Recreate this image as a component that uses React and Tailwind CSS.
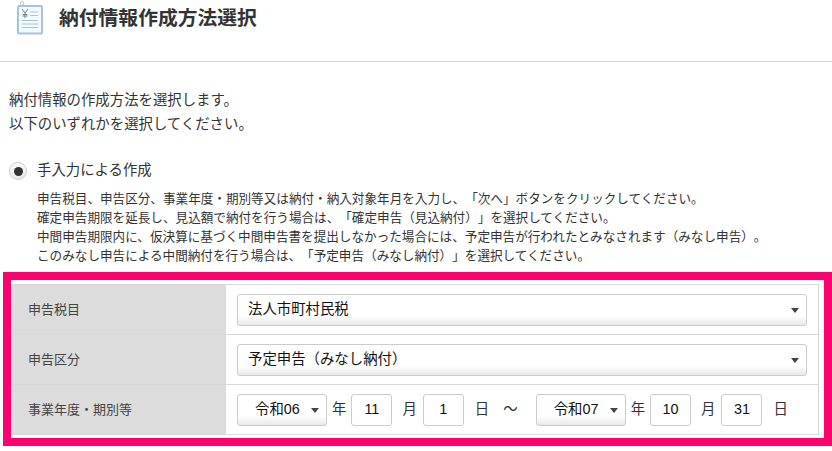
function Caret() {
  return <span className="w-0 h-0 border-x-[4px] border-x-transparent border-t-[5px] border-t-[#444]" />;
}

function Sel({ children, className }) {
  return (
    <div className={`flex items-center h-[32px] mt-[1px] rounded-[3px] border border-[#ccc] bg-gradient-to-b from-white from-70% to-[#e8e8e8] text-[14.4px] text-[#111] ${className}`}>
      {children}
    </div>
  );
}

function Num({ children }) {
  return (
    <div className="flex items-center justify-center h-[32px] mt-[1px] w-[41px] rounded-[3px] border border-[#ccc] bg-white text-[14.4px] text-[#111]">{children}</div>
  );
}

function Row({ label, children, last }) {
  return (
    <div className={`flex ${last ? "h-[49px]" : "h-[50px] border-b border-[#d8d8d8]"}`}>
      <div className="flex items-center w-[216px] shrink-0 bg-[#dcdcdc] pl-[17px] text-[13px] text-[#444] border-r border-white">{label}</div>
      <div className="flex items-center flex-1 pl-[10px] pr-[11px]">{children}</div>
    </div>
  );
}

export default function App() {
  return (
    <div className="w-[832px] h-[451px] overflow-hidden bg-white text-[#333] [text-spacing-trim:space-all] font-['Liberation_Sans','Noto_Sans_CJK_JP',sans-serif]">
      <div className="flex items-start h-[62px] border-b border-[#d4d4d4] pl-[17px]">
        <svg width="27" height="36" viewBox="0 0 27 36" className="shrink-0">
          <rect x="1" y="6" width="24" height="27.5" rx="1" fill="#f4f9fd" stroke="#a5c5dd" strokeWidth="2" />
          <path d="M4 6 L3 3 L5 1.5 L7 3 L6 6" fill="none" stroke="#a5c5dd" strokeWidth="1" />
          <path d="M5 9 L8 13 L11 9 M8 13 V18 M5.5 14.5 H10.5 M5.5 16 H10.5" fill="none" stroke="#6b8396" strokeWidth="1" />
          <path d="M13 12 H21 M13 15.5 H21 M5 20.5 H21 M5 24 H21 M5 27.5 H21" stroke="#a5c5dd" strokeWidth="1.2" />
        </svg>
        <h1 className="ml-[15px] mt-[5px] text-[19.8px] leading-[26px] font-bold text-[#333]">納付情報作成方法選択</h1>
      </div>

      <div className="pl-[9px] pt-[26px] text-[14.4px] leading-[24px] text-[#333]">
        <p>納付情報の作成方法を選択します。</p>
        <p>以下のいずれかを選択してください。</p>
      </div>

      <div className="flex items-center pl-[9px] mt-[22px] h-[26px]">
        <span className="flex items-center justify-center w-[18px] h-[18px] rounded-full border border-[#ccc] bg-gradient-to-b from-white to-[#e8e8e8]">
          <span className="w-[9px] h-[9px] rounded-full bg-[#333]" />
        </span>
        <span className="ml-[10px] text-[14.4px] text-[#333]">手入力による作成</span>
      </div>

      <div className="pl-[37px] mt-[6px] text-[12.6px] leading-[19px] text-[#333] whitespace-nowrap">
        <p>申告税目、申告区分、事業年度・期別等又は納付・納入対象年月を入力し、「次へ」ボタンをクリックしてください。</p>
        <p>確定申告期限を延長し、見込額で納付を行う場合は、「確定申告（見込納付）」を選択してください。</p>
        <p>中間申告期限内に、仮決算に基づく中間申告書を提出しなかった場合には、予定申告が行われたとみなされます（みなし申告）。</p>
        <p>このみなし申告による中間納付を行う場合は、「予定申告（みなし納付）」を選択してください。</p>
      </div>

      <div className="ml-[3px] mt-[6px] w-[829px] h-[174px] border-[8px] border-[#ff006f] pt-[4px] pr-[5px] pb-[3px]">
        <div className="border-y border-r border-[#d8d8d8]">
          <Row label="申告税目">
            <Sel className="w-full pl-[10px] pr-[7px] justify-between"><span>法人市町村民税</span><Caret /></Sel>
          </Row>
          <Row label="申告区分">
            <Sel className="w-full pl-[10px] pr-[7px] justify-between"><span>予定申告（みなし納付）</span><Caret /></Sel>
          </Row>
          <Row label="事業年度・期別等" last>
            <Sel className="w-[90px] pl-[17px] pr-[7px] justify-between shrink-0"><span>令和06</span><Caret /></Sel>
            <span className="ml-[5px] text-[14.4px]">年</span>
            <span className="ml-[5px]"><Num>11</Num></span>
            <span className="ml-[10px] text-[14.4px]">月</span>
            <span className="ml-[6px]"><Num>1</Num></span>
            <span className="ml-[11px] text-[14.4px]">日</span>
            <span className="ml-[14px] text-[14.4px]">～</span>
            <Sel className="ml-[18px] w-[90px] pl-[17px] pr-[7px] justify-between shrink-0"><span>令和07</span><Caret /></Sel>
            <span className="ml-[5px] text-[14.4px]">年</span>
            <span className="ml-[5px]"><Num>10</Num></span>
            <span className="ml-[10px] text-[14.4px]">月</span>
            <span className="ml-[6px]"><Num>31</Num></span>
            <span className="ml-[11px] text-[14.4px]">日</span>
          </Row>
        </div>
      </div>
    </div>
  );
}
